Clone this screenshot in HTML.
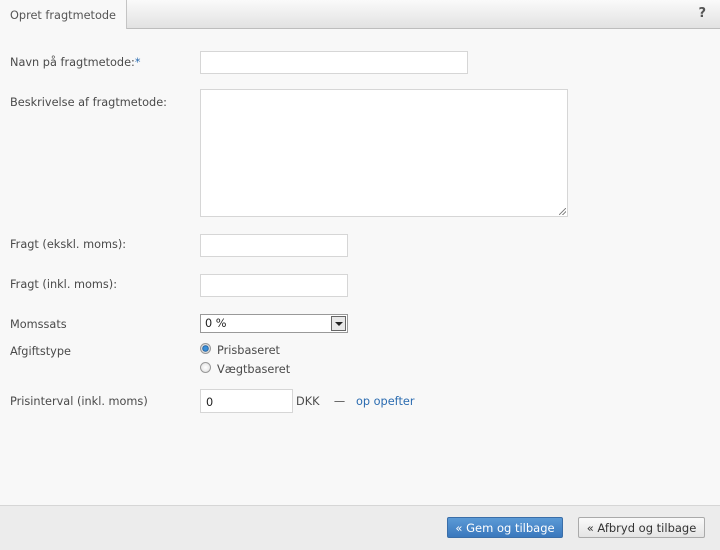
<!DOCTYPE html>
<html><head><meta charset="utf-8"><style>
*{box-sizing:border-box;margin:0;padding:0}
body{width:720px;height:550px;background:#f8f8f8;font-family:"DejaVu Sans",Verdana,sans-serif;font-size:11.3px;color:#4a4a4a;position:relative;overflow:hidden}
.hdr{position:absolute;left:0;top:0;width:720px;height:29px;background:linear-gradient(#fafafa,#e2e2e2);border-bottom:1px solid #bdbdbd}
.tab{position:absolute;left:0;top:0;width:127px;height:29px;background:#f8f8f8;border-right:1px solid #c4c4c4;padding:9px 0 0 10px;color:#555}
.q{position:absolute;right:14px;top:6px;font-weight:bold;font-size:13px;color:#555}
.l{position:absolute;left:10px}
.in{position:absolute;background:#fff;border:1px solid #d6d6d6}
.ft{position:absolute;left:0;top:505px;width:720px;height:45px;background:#ececec;border-top:1px solid #d6d6d6}
.btn{position:absolute;height:21px;border-radius:2px;padding-top:3px;text-align:center;font-size:11.5px}
a{color:#2a6bb0;text-decoration:none}
.r{position:absolute;left:200px;width:11px;height:11px;border-radius:50%;border:1px solid #999;background:radial-gradient(#fff,#ddd)}
</style></head><body>
<div class="hdr"><div class="tab">Opret fragtmetode</div><div class="q">?</div></div>
<div class="l" style="top:56px">Navn på fragtmetode:<span style="color:#2a6bb0">*</span></div>
<div class="in" style="left:200px;top:51px;width:268px;height:23px"></div>
<div class="l" style="top:96px">Beskrivelse af fragtmetode:</div>
<div class="in" style="left:200px;top:89px;width:368px;height:128px"><div style="position:absolute;right:1px;bottom:1px;width:7px;height:7px;background:linear-gradient(135deg,transparent 45%,#888 45%,#888 55%,transparent 55%,transparent 70%,#888 70%,#888 80%,transparent 80%)"></div></div>
<div class="l" style="top:238px">Fragt (ekskl. moms):</div>
<div class="in" style="left:200px;top:234px;width:148px;height:23px"></div>
<div class="l" style="top:278px">Fragt (inkl. moms):</div>
<div class="in" style="left:200px;top:274px;width:148px;height:23px"></div>
<div class="l" style="top:318px">Momssats</div>
<div class="in" style="left:200px;top:314px;width:148px;height:19px;border-color:#999;padding:2px 0 0 4px;color:#222">0 %<div style="position:absolute;right:1px;top:1px;width:15px;height:15px;background:#e8e8e8;border:1px solid #666"><div style="position:absolute;left:3px;top:5px;border:4px solid transparent;border-top:4px solid #222;border-bottom:0"></div></div></div>
<div class="l" style="top:345px">Afgiftstype</div>
<div class="r" style="top:343px;background:radial-gradient(#3a8fd8 30%,#1a5a9a 45%,#ddd 55%)"></div>
<div style="position:absolute;left:217px;top:344px">Prisbaseret</div>
<div class="r" style="top:362px"></div>
<div style="position:absolute;left:217px;top:363px">Vægtbaseret</div>
<div class="l" style="top:395px">Prisinterval (inkl. moms)</div>
<div class="in" style="left:200px;top:389px;width:93px;height:24px;padding:6px 0 0 5px;color:#222">0</div>
<div style="position:absolute;left:296px;top:395px">DKK &nbsp;&nbsp; — &nbsp;&nbsp;<a>op opefter</a></div>
<div class="ft"></div>
<div class="btn" style="left:447px;top:517px;width:116px;background:linear-gradient(#5b9ad6,#3a78bd);border:1px solid #3a6ea8;color:#fff">« Gem og tilbage</div>
<div class="btn" style="left:578px;top:517px;width:127px;background:linear-gradient(#fafafa,#e4e4e4);border:1px solid #aaa;color:#333">« Afbryd og tilbage</div>
</body></html>
